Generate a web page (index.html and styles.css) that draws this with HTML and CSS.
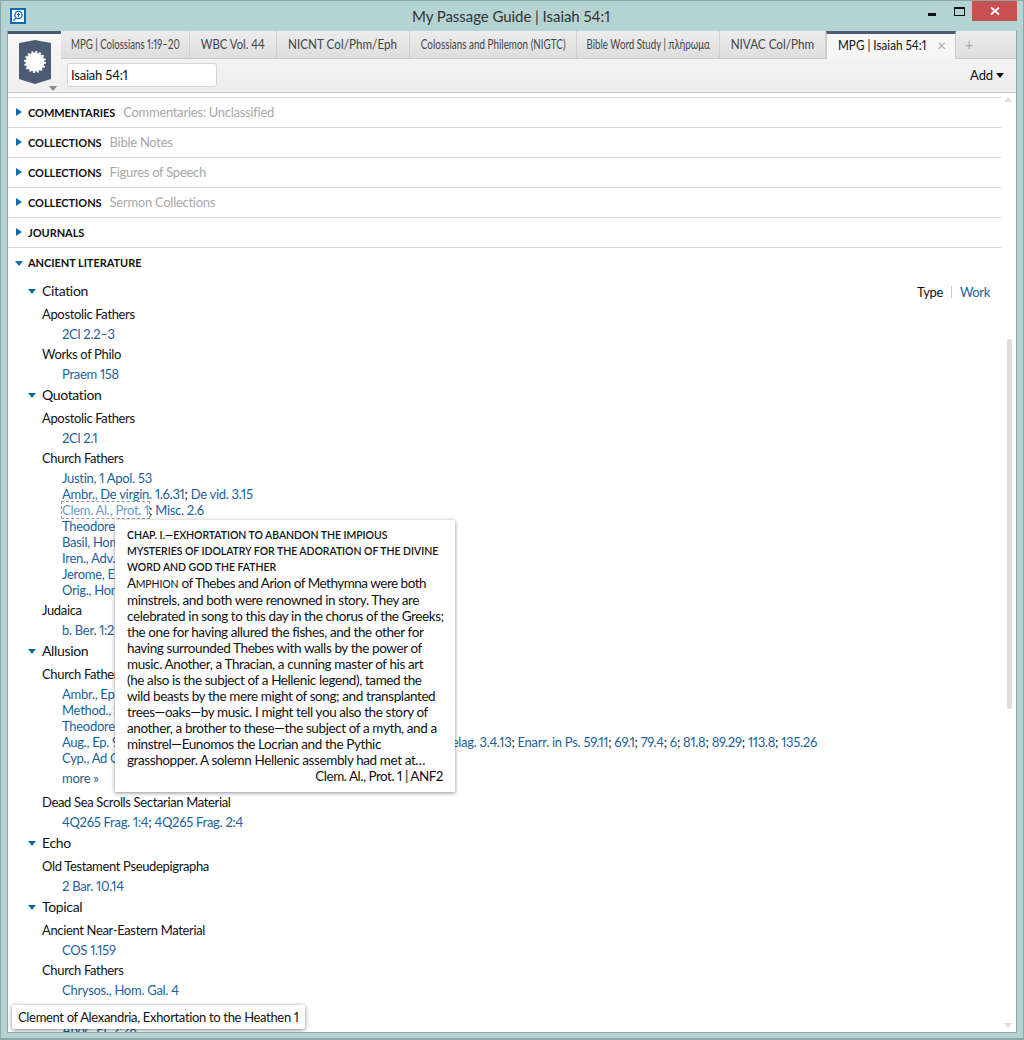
FILE: index.html
```html
<!DOCTYPE html>
<html lang="en">
<head>
<meta charset="utf-8">
<title>My Passage Guide | Isaiah 54:1</title>
<link rel="stylesheet" href="styles.css">
</head>
<body>
<div class="window">
  <header class="titlebar">
    <svg class="appicon" viewBox="0 0 16 16"><rect width="16" height="16" fill="#0e6bb0"/><rect x="2" y="2" width="12" height="12" fill="#fff"/><circle cx="8.500" cy="7" r="3.600" fill="none" stroke="#0e6bb0" stroke-width="1.300"/><path d="M6 10 3.500 12.500M8.500 5v4M7 6.500h3" fill="none" stroke="#0e6bb0" stroke-width="1.200"/></svg>
    <div class="title">My Passage Guide | Isaiah 54:1</div>
    <div class="winbtns">
      <span class="wb"><span class="min"></span></span>
      <span class="wb narrow"><span class="max"></span></span>
      <span class="wb close"><svg viewBox="0 0 10 10" class="x"><path d="M1 1.500 9 8.500M9 1.500 1 8.500" stroke="#fff" stroke-width="1.800"/></svg></span>
    </div>
  </header>
  <div class="app">
    <div class="chrome">
      <div class="logo">
        <svg class="shield" viewBox="0 0 32 44"><path d="M16 0 32 3V39L16 44 0 39V3Z" fill="#4b5b74"/><circle cx="16" cy="22" r="9.500" fill="#fff" stroke="#fff" stroke-width="3" stroke-dasharray="1.870 1.860"/></svg>
        <span class="logocaret"></span>
      </div>
      <div class="chromemain">
        <nav class="tabs">
          <span class="tab t1"><span class="sq74">MPG | Colossians 1:19–20</span></span>
          <span class="tab t2"><span class="sq87">WBC Vol. 44</span></span>
          <span class="tab t3"><span class="sq90">NICNT Col/Phm/Eph</span></span>
          <span class="tab t4"><span class="sq76">Colossians and Philemon (NIGTC)</span></span>
          <span class="tab t5"><span class="sq75">Bible Word Study | πλήρωμα</span></span>
          <span class="tab t6"><span class="sq90">NIVAC Col/Phm</span></span>
          <span class="tab active"><span class="sqa">MPG | Isaiah 54:1</span><span class="tabx">×</span></span>
          <span class="tabplus">+</span>
        </nav>
        <div class="toolbar">
          <div class="refbox">Isaiah 54:1</div>
          <div class="add">Add <span class="caret"></span></div>
        </div>
      </div>
    </div>
    <main class="content">
      <div class="scrollbar"><span class="up"></span><span class="thumb"></span><span class="down"></span></div>
      <section class="rows">
        <div class="row"><span class="tri"></span><b>COMMENTARIES</b><span class="sub">Commentaries: Unclassified</span></div>
        <div class="row"><span class="tri"></span><b>COLLECTIONS</b><span class="sub">Bible Notes</span></div>
        <div class="row"><span class="tri"></span><b>COLLECTIONS</b><span class="sub">Figures of Speech</span></div>
        <div class="row"><span class="tri"></span><b>COLLECTIONS</b><span class="sub">Sermon Collections</span></div>
        <div class="row"><span class="tri"></span><b>JOURNALS</b></div>
        <div class="row open"><span class="tri down"></span><b>ANCIENT LITERATURE</b></div>
      </section>
      <section class="tree">
        <div class="switch"><span>Type</span><i></i><a>Work</a></div>
        <h3><span class="tri down"></span>Citation</h3>
        <h4>Apostolic Fathers</h4>
        <p><a>2Cl 2.2–3</a></p>
        <h4>Works of Philo</h4>
        <p><a>Praem 158</a></p>
        <h3><span class="tri down"></span>Quotation</h3>
        <h4>Apostolic Fathers</h4>
        <p><a>2Cl 2.1</a></p>
        <h4>Church Fathers</h4>
        <p><a>Justin, 1 Apol. 53</a><br>
        <a>Ambr., De virgin. 1.6.31</a>; <a>De vid. 3.15</a><br>
        <a class="focus">Clem. Al., Prot. 1</a>; <a>Misc. 2.6</a><br>
        <a>Theodoret, Comm. Isa.</a><br>
        <a>Basil, Hom. Ps.</a><br>
        <a>Iren., Adv. haer.</a><br>
        <a>Jerome, Ep.</a><br>
        <a>Orig., Hom.</a></p>
        <h4>Judaica</h4>
        <p><a>b. Ber. 1:2</a></p>
        <h3><span class="tri down"></span>Allusion</h3>
        <h4>Church Fathers</h4>
        <p><a>Ambr., Ep.</a><br>
        <a>Method., Symp.</a><br>
        <a>Theodoret, Comm.</a><br>
        <a>Aug., Ep. 98.9; Civ. 18.29; Faust. 12.33; Trin. 4.2; Serm. 121.14; C. du. ep. Pelag. 3.4.13</a>; <a>Enarr. in Ps. 59.11</a>; <a>69.1</a>; <a>79.4</a>; <a>6</a>; <a>81.8</a>; <a>89.29</a>; <a>113.8</a>; <a>135.26</a><br>
        <a>Cyp., Ad Quir.</a>
        <a class="more">more »</a></p>
        <h4>Dead Sea Scrolls Sectarian Material</h4>
        <p><a>4Q265 Frag. 1:4</a>; <a>4Q265 Frag. 2:4</a></p>
        <h3><span class="tri down"></span>Echo</h3>
        <h4>Old Testament Pseudepigrapha</h4>
        <p><a>2 Bar. 10.14</a></p>
        <h3><span class="tri down"></span>Topical</h3>
        <h4>Ancient Near-Eastern Material</h4>
        <p><a>COS 1.159</a></p>
        <h4>Church Fathers</h4>
        <p><a>Chrysos., Hom. Gal. 4</a></p>
        <h4>Old Testament Pseudepigrapha</h4>
        <p><a>Apoc. El. 2:28</a></p>
      </section>
      <aside class="popup">
        <div class="ptitle">CHAP. I.—EXHORTATION TO ABANDON THE IMPIOUS<br>MYSTERIES OF IDOLATRY FOR THE ADORATION OF THE DIVINE<br>WORD AND GOD THE FATHER</div>
        <div class="pbody"><span class="pfirst">A<span class="sc">MPHION</span> of Thebes and Arion of Methymna were both</span><br>minstrels, and both were renowned in story. They are<br>celebrated in song to this day in the chorus of the Greeks;<br>the one for having allured the fishes, and the other for<br>having surrounded Thebes with walls by the power of<br>music. Another, a Thracian, a cunning master of his art<br>(he also is the subject of a Hellenic legend), tamed the<br>wild beasts by the mere might of song; and transplanted<br>trees—oaks—by music. I might tell you also the story of<br>another, a brother to these—the subject of a myth, and a<br>minstrel—Eunomos the Locrian and the Pythic<br>grasshopper. A solemn Hellenic assembly had met at…</div>
        <div class="psrc">Clem. Al., Prot. 1 | ANF2</div>
      </aside>
      <div class="tip">Clement of Alexandria, Exhortation to the Heathen 1</div>
    </main>
  </div>
</div>
</body>
</html>
```
FILE: styles.css
```css
* { box-sizing: border-box; }
html, body { margin: 0; height: 100%; }
body { font-family: Lato, "Noto Sans", sans-serif; font-size: 13px; letter-spacing: -.35px; font-variant-numeric: proportional-nums; color: #111; overflow: hidden; }
.window { width: 1024px; height: 1040px; background: #b5d3d3; border: 1px solid #8ba7a7; border-bottom-width: 2px; display: flex; flex-direction: column; padding: 0 6px 5px 6px; }
.titlebar { height: 30px; display: flex; align-items: center; position: relative; flex: none; }
.appicon { width: 16px; height: 16px; margin: -1px 0 0 3px; }
.title { position: absolute; left: -2px; right: 0; top: 6px; text-align: center; font-size: 15px; letter-spacing: -.05px; color: #333; }
.winbtns { position: absolute; right: 0; top: 0; display: flex; }
.wb { width: 30px; height: 20px; display: flex; align-items: center; justify-content: center; }
.wb.narrow { width: 25px; }
.wb.close { width: 45px; background: #c75050; }
.min { width: 8px; height: 3px; background: #111; margin-top: 6px; }
.max { width: 11px; height: 9px; border: 1px solid #111; border-top-width: 2px; }
.x { width: 10px; height: 10px; }
.app { flex: 1; min-height: 0; display: flex; flex-direction: column; background: #fff; border: 1px solid #8ba7a7; border-top: 0; }
.chrome { display: flex; height: 62px; flex: none; border-bottom: 1px solid #c9c9c9; background: linear-gradient(#f6f6f6, #eeeeee); }
.logo { width: 53px; position: relative; border-top: 3px solid #4b5b74; background: linear-gradient(#f8f8f8, #efefef); display: flex; justify-content: center; padding-top: 6px; }
.shield { width: 32px; height: 44px; }
.logocaret { position: absolute; left: 41px; top: 52px; border: 4px solid transparent; border-top: 5px solid #888; border-bottom: 0; }
.chromemain { flex: 1; min-width: 0; display: flex; flex-direction: column; }
.tabs { display: flex; height: 28px; flex: none; background: linear-gradient(#ececec, #dedede); border-bottom: 1px solid #c9c9c9; font-size: 13px; letter-spacing: 0; color: #444; }
.tab { display: flex; align-items: center; justify-content: center; border-right: 1px solid #d0d0d0; white-space: nowrap; height: 27px; padding-bottom: 2px; overflow: hidden; }
.t1 { width: 129px; } .t2 { width: 87px; } .t3 { width: 133px; } .t4 { width: 167px; } .t5 { width: 143px; } .t6 { width: 106px; }
.sq74, .sq87, .sq90, .sq76, .sq75, .sqa { display: inline-block; flex: none; }
.sq74 { transform: scaleX(.74); } .sq87 { transform: scaleX(.87); } .sq90 { transform: scaleX(.9); } .sq76 { transform: scaleX(.76); } .sq75 { transform: scaleX(.75); }
.sqa { transform: scaleX(.9); transform-origin: 0 50%; }
.active { width: 130px; height: 28px; background: #f6f6f6; border-top: 3px solid #4b5b74; border-left: 1px solid #c9c9c9; border-right: 1px solid #c9c9c9; color: #111; justify-content: flex-start; padding: 0 0 4px 11px; }
.tabx { position: relative; left: 1px; font-size: 15px; color: #aaa; }
.tabplus { width: 26px; text-align: center; color: #aaa; font-size: 15px; line-height: 26px; }
.toolbar { flex: 1; display: flex; align-items: center; justify-content: space-between; padding: 0 12px 1px 6px; }
.refbox { width: 150px; height: 24px; background: #fff; border: 1px solid #d4d4d4; border-radius: 3px; padding-left: 3px; line-height: 22px; font-size: 13px; letter-spacing: -.2px; color: #111; }
.add { font-size: 13px; letter-spacing: -.1px; color: #111; display: flex; align-items: center; gap: 3px; }
.caret { border: 4.500px solid transparent; border-top: 5px solid #111; border-bottom: 0; }
.content { flex: 1; min-height: 0; overflow: hidden; position: relative; padding: 4px 0 0 0; }
.rows { margin-right: 15px; border-top: 1px solid #dcdcdc; }
.row { height: 30px; display: flex; align-items: center; border-bottom: 1px solid #d8d8d8; padding: 0 0 1px 8px; }
.row.open { border-bottom: 0; }
.row b { font-weight: 700; font-size: 11px; letter-spacing: -.05px; margin-left: 6px; }
.sub { color: #a8a8a8; margin-left: 8px; font-size: 13px; letter-spacing: -.27px; }
.tri { width: 0; height: 0; flex: none; border: 4px solid transparent; border-left: 6px solid #0e6bb0; border-right: 0; }
.tri.down { border: 4px solid transparent; border-top: 5px solid #0e6bb0; border-bottom: 0; }
.row .tri.down { margin-top: 1px; margin-left: -1px; margin-right: -1px; }
.tree { padding: 4px 0 0 34px; position: relative; }
h3 { margin: 0 0 6px 0; font-size: 14px; font-weight: 400; height: 18px; line-height: 18px; position: relative; }
h3 .tri { position: absolute; left: -14px; top: 7px; }
h4 { margin: 0; font-size: 13px; font-weight: 400; height: 16px; line-height: 16px; margin-bottom: 4px; }
.tree p { margin: 0 0 4px 20px; line-height: 16px; white-space: nowrap; letter-spacing: -.28px; }
a { color: #1c5f9c; }
.more { display: block; margin-top: 4px; padding-bottom: 4px; }
.focus { color: #6a9cc8; outline: 1px dashed #999; outline-offset: 0; }
.switch { position: absolute; right: 26px; top: 6px; display: flex; align-items: center; gap: 8px; }
.switch i { width: 1px; height: 12px; background: #ccc; }
.popup { position: absolute; left: 107px; top: 427px; width: 340px; height: 272px; background: #fff; box-shadow: 0 1px 4px rgba(0,0,0,.45); padding: 7px 12px; white-space: nowrap; }
.ptitle { font-size: 10.500px; line-height: 16px; font-weight: 600; letter-spacing: -.05px; }
.pbody { line-height: 16px; font-size: 13.500px; letter-spacing: -.4px; }
.pfirst { letter-spacing: -.5px; }
.sc { font-size: 10.500px; letter-spacing: -.1px; }
.psrc { text-align: right; line-height: 16px; font-size: 13.500px; letter-spacing: -.5px; }
.tip { position: absolute; left: 4px; top: 912px; height: 24px; line-height: 24px; padding: 0 6px; background: #fff; box-shadow: 0 1px 4px rgba(0,0,0,.5); border-radius: 2px; letter-spacing: -.33px; }
.scrollbar { position: absolute; right: 0; top: 0; bottom: 0; width: 15px; }
.scrollbar .up, .scrollbar .down { position: absolute; left: 3px; border: 4px solid transparent; }
.scrollbar .up { top: 4px; border-bottom: 5px solid #ddd; border-top: 0; }
.scrollbar .down { bottom: 4px; border-top: 5px solid #ddd; border-bottom: 0; }
.thumb { position: absolute; left: 6px; top: 246px; width: 5px; height: 370px; background: #ddd; border-radius: 2px; }
```
